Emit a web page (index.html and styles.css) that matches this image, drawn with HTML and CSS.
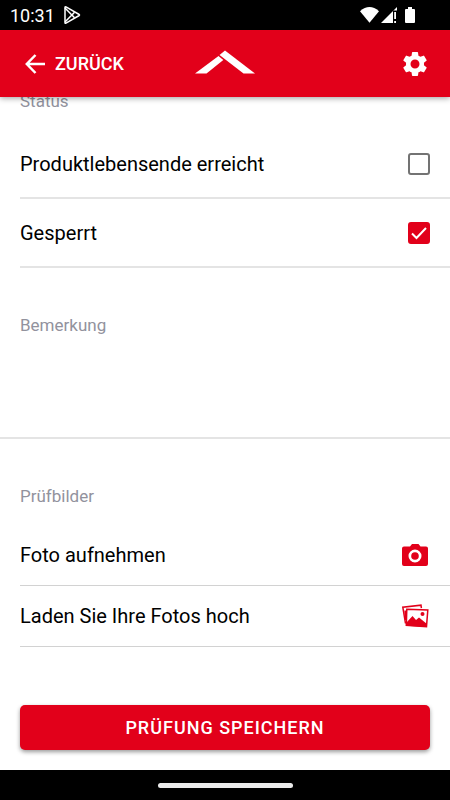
FILE: index.html
```html
<!DOCTYPE html>
<html lang="de">
<head>
    <meta charset="UTF-8">
    <meta name="viewport" content="width=device-width, initial-scale=1.0">
    <title>Prüfung</title>
    <link rel="stylesheet" href="styles.css">
</head>
<body>
    <div class="status-bar">
        <span class="clock">10:31</span>
        <svg class="play-icon" width="18" height="18" viewBox="0 0 18 18" fill="none" stroke="#fff" stroke-width="1.5" stroke-linejoin="round">
            <path d="M2 1.2v15.6q.3.6 1 .3L16.200 9.500q.6-.5 0-1L3 .9q-.7-.3-1 .3z"/>
            <path d="M2 2l9.500 9.700M2 16l9.500-9.700M11.500 6.300L9 9l2.500 2.700"/>
        </svg>
        <div class="system-icons">
            <svg width="19" height="16" viewBox="0 0 19 16" fill="#fff"><path d="M0 4.200Q9.500-4 19 4.200L9.500 15.800z"/></svg>
            <svg width="16" height="16" viewBox="0 0 16 16" fill="#fff"><path d="M0 16L16 0v3.500h-4V16z"/><path d="M13.200 5H15v7h-1.800zM13.200 14H15v2h-1.800z"/></svg>
            <svg class="battery" width="10" height="16" viewBox="0 0 10 16" fill="#fff"><path d="M3 0h4v2h2q1 0 1 1v12q0 1-1 1H1q-1 0-1-1V3q0-1 1-1h2z"/></svg>
        </div>
    </div>

    <header class="toolbar">
        <button type="button" class="back">
            <svg width="20" height="20" viewBox="0 0 20 20" fill="none" stroke="#fff" stroke-width="2.500"><path d="M10.500 1L1.800 10l8.700 9M2 10h18"/></svg>
            Zurück
        </button>
        <svg class="logo" width="60" height="28" viewBox="0 0 60 28" fill="#fff">
            <path d="M0 23.500L23.500 6 28.300 10 11.500 23.500z"/>
            <path d="M24.500 5L30 .5 60 23.500H48.500z"/>
        </svg>
        <button type="button" class="settings" aria-label="Einstellungen">
            <svg width="30" height="30" viewBox="0 0 24 24" fill="#fff"><path d="M19.140 12.940c.04-.3.06-.61.06-.94s-.02-.64-.07-.94l2.030-1.580a.49.49 0 0 0 .12-.61l-1.920-3.320a.49.49 0 0 0-.59-.22l-2.390.96a7 7 0 0 0-1.620-.94l-.36-2.540a.48.48 0 0 0-.48-.41h-3.840a.47.47 0 0 0-.47.41l-.36 2.540c-.59.24-1.130.57-1.620.94l-2.390-.96a.48.48 0 0 0-.59.22L2.740 8.870a.47.47 0 0 0 .12.610l2.030 1.580c-.05.3-.09.63-.09.94s.02.64.07.94l-2.030 1.580a.49.49 0 0 0-.12.610l1.920 3.320c.12.220.37.290.59.220l2.390-.96c.5.38 1.030.7 1.620.94l.36 2.540c.05.240.24.410.48.410h3.840c.24 0 .44-.17.47-.41l.36-2.540a7 7 0 0 0 1.620-.94l2.390.96c.22.080.47 0 .59-.22l1.920-3.320a.47.47 0 0 0-.12-.61zM12 15.600a3.600 3.600 0 1 1 0-7.200 3.600 3.600 0 0 1 0 7.200z"/></svg>
        </button>
    </header>

    <main class="content">
        <section class="group">
            <h2>Status</h2>
            <label class="row check-row">
                <span>Produktlebensende erreicht</span>
                <input type="checkbox">
            </label>
            <label class="row check-row">
                <span>Gesperrt</span>
                <input type="checkbox" checked>
            </label>
        </section>

        <section class="group">
            <h2><label for="remark">Bemerkung</label></h2>
            <textarea id="remark"></textarea>
        </section>

        <section class="group">
            <h2>Prüfbilder</h2>
            <button type="button" class="row photo-row">
                <span>Foto aufnehmen</span>
                <svg width="30" height="30" viewBox="0 0 30 30" fill="#e2001a">
                    <path fill-rule="evenodd" d="M4 6.500h6L12 4h6.500l2 2.500H26q2 0 2 2V24q0 2-2 2H4q-2 0-2-2V8.500q0-2 2-2zM15 9.500a6.500 6.500 0 1 0 0 13 6.500 6.500 0 0 0 0-13z"/>
                    <circle cx="15" cy="16" r="3.800"/>
                </svg>
            </button>
            <button type="button" class="row photo-row">
                <span>Laden Sie Ihre Fotos hoch</span>
                <svg width="30" height="30" viewBox="0 0 30 30" fill="none" stroke="#e2001a" stroke-width="1.500">
                    <path d="M5.500 22.500L2.800 6.200 21 4.200l.4 3M5.200 9.500l1 9.500"/>
                    <path d="M6.800 8.200l21 .8-1.300 16.600-20.200-1.200z"/>
                    <path fill="#e2001a" stroke="none" d="M6.500 21.500l6-6.500 3.500 4 3-2.500 8 6.500-.5 3-20.300-1.200z"/>
                    <circle cx="22.500" cy="13" r="2" fill="#e2001a" stroke="none"/>
                </svg>
            </button>
        </section>

        <button type="submit" class="save">Prüfung speichern</button>
    </main>

    <div class="nav-bar"><span class="handle"></span></div>
</body>
</html>
```
FILE: styles.css
```css
:root {
    --brand: #e2001a;
    --line: #e4e4e4;
    --muted: #92929d;
}

* {
    margin: 0;
    padding: 0;
    box-sizing: border-box;
}

body {
    display: flex;
    flex-direction: column;
    min-height: 100vh;
    background-color: white;
    color: black;
    font-family: Roboto, sans-serif;
}

button {
    border: none;
    background: none;
    color: inherit;
    font-family: inherit;
    cursor: pointer;
}

svg {
    display: block;
    flex-shrink: 0;
}

.status-bar {
    display: flex;
    align-items: center;
    gap: 8px;
    height: 30px;
    padding: 0 35px 0 10px;
    background-color: black;
    color: white;
    z-index: 2;
}

.clock {
    font-size: 18px;
}

.system-icons {
    display: flex;
    gap: 2px;
    margin-left: auto;
}

.battery {
    margin-left: 6px;
}

.toolbar {
    display: grid;
    grid-template-columns: 1fr auto 1fr;
    align-items: center;
    height: 67px;
    padding: 0 20px;
    background-color: var(--brand);
    color: white;
    box-shadow: 0 1px 6px rgba(0, 0, 0, 0.4);
    z-index: 1;
}

.back {
    display: flex;
    align-items: center;
    gap: 10px;
    padding-left: 5px;
    font-size: 18px;
    font-weight: 500;
    text-transform: uppercase;
}

.settings {
    justify-self: end;
}

.content {
    flex: 1;
    display: flex;
    flex-direction: column;
}

.group {
    display: flex;
    flex-direction: column;
    padding-top: 47px;
}

/* first group is scrolled up under the toolbar */
.group:first-child {
    margin-top: -53px;
}

h2 {
    padding-left: 20px;
    color: var(--muted);
    font-size: 17px;
    font-weight: 400;
    line-height: 20px;
}

.row {
    display: flex;
    justify-content: space-between;
    align-items: center;
    margin-left: 20px;
    padding-right: 20px;
    font-size: 20px;
    text-align: left;
}

h2 + .row {
    margin-top: 19px;
}

.check-row {
    height: 69px;
    border-bottom: 2px solid var(--line);
}

.photo-row {
    height: 61px;
    border-bottom: 1px solid #d2d2d2;
}

input[type="checkbox"] {
    appearance: none;
    width: 22px;
    height: 22px;
    border: 2px solid #737373;
    border-radius: 3px;
}

input[type="checkbox"]:checked {
    border-color: var(--brand);
    background: var(--brand) url("data:image/svg+xml,%3Csvg xmlns='http://www.w3.org/2000/svg' viewBox='0 0 18 18' fill='none' stroke='white' stroke-width='2'%3E%3Cpath d='M2 9.500l4.500 4.500L16 4'/%3E%3C/svg%3E") center / 18px no-repeat;
}

textarea {
    height: 104px;
    padding: 10px 20px;
    border: none;
    border-bottom: 2px solid var(--line);
    outline: none;
    resize: none;
    font: inherit;
    font-size: 20px;
}

.save {
    height: 45px;
    margin: 58px 20px 20px;
    border-radius: 5px;
    background-color: var(--brand);
    box-shadow: 0 2px 4px rgba(0, 0, 0, 0.4);
    color: white;
    font-size: 18px;
    font-weight: 500;
    letter-spacing: 1px;
    text-transform: uppercase;
}

.nav-bar {
    display: flex;
    justify-content: center;
    align-items: center;
    height: 30px;
    background-color: black;
}

.handle {
    width: 30%;
    height: 5px;
    border-radius: 3px;
    background-color: #ebebeb;
}
```
